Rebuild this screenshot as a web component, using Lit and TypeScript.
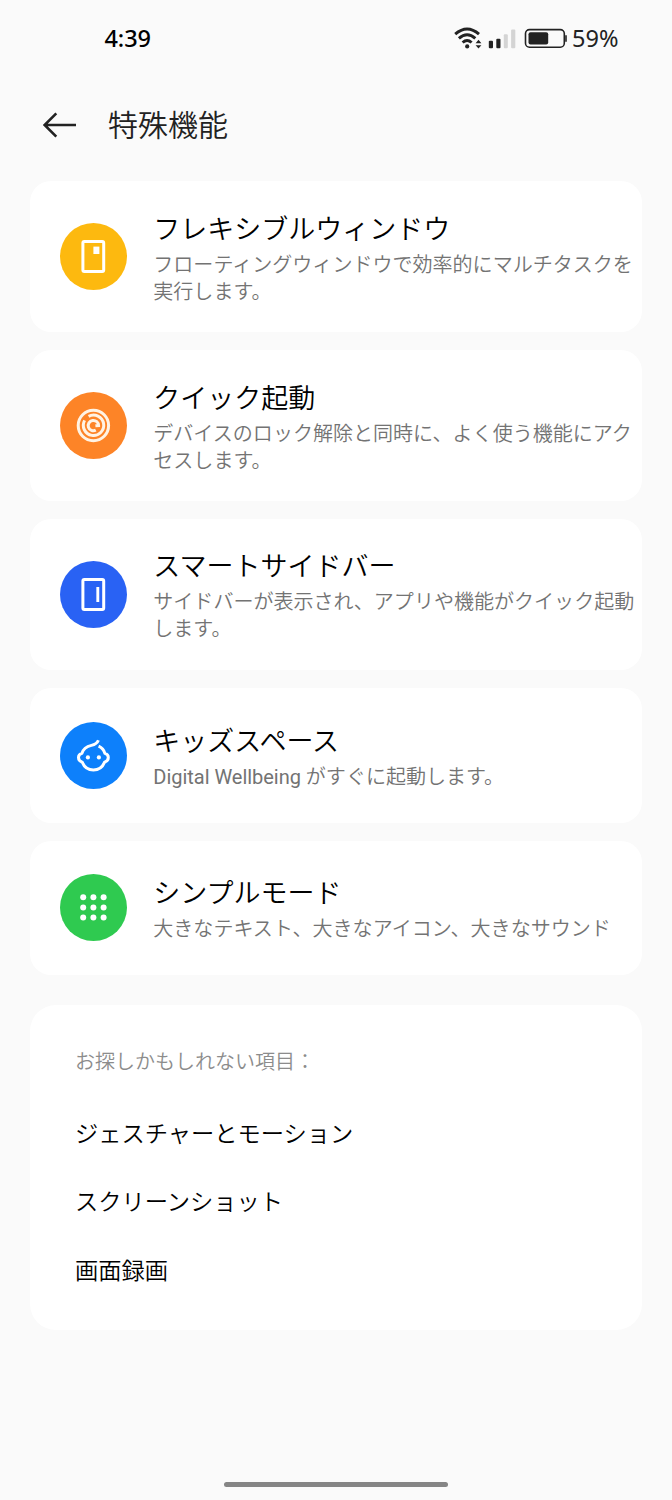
import { LitElement, html, svg, css } from "lit";
import { customElement, property } from "lit/decorators.js";

const icons: Record<string, unknown> = {
  window: svg`
    <rect x="22.9" y="18.6" width="20.8" height="29.8" rx="1.4" fill="none" stroke="#fff" stroke-width="3"/>
    <rect x="33.4" y="23.6" width="6" height="7.4" fill="#fff"/>`,
  swirl: svg`
    <g fill="none" stroke="#fff3e4" stroke-width="3">
      <circle cx="33.4" cy="33.5" r="15.2"/>
      <path d="M28.6 24.4 A10.2 10.2 0 1 1 24.6 28.4"/>
      <path d="M35.8 38.2 A5.2 5.2 0 1 1 38.6 33.6 L35.4 33.8"/>
    </g>`,
  sidebar: svg`
    <rect x="22.9" y="18.6" width="20.8" height="29.8" rx="1.4" fill="none" stroke="#fff" stroke-width="3"/>
    <path d="M37.8 26v15" stroke="#fff" stroke-width="2.9"/>`,
  kid: svg`
    <path d="M38.4 18.2C37.2 21.2 34.8 22.6 31.4 23.4C26.2 24.6 23 27.6 21.9 31.4C19.6 32 18.5 33.6 18.5 35.6C18.5 37.8 19.8 39.4 22.2 40.1C24.3 45.2 28.3 48 33.4 48C38.5 48 42.5 45.2 44.6 40.1C47 39.4 48.3 37.8 48.3 35.6C48.3 33.6 47.2 32 44.9 31.4C43.9 28 41.8 25.6 38.6 24.2" fill="none" stroke="#fff" stroke-width="3" stroke-linejoin="round"/>
    <circle cx="27.9" cy="35.4" r="2.1" fill="#fff"/><circle cx="38.9" cy="35.4" r="2.1" fill="#fff"/>`,
  grid: svg`<g fill="#fff">${[23.2, 33.4, 43.6].map((y) =>
    [23.2, 33.4, 43.6].map((x) => svg`<circle cx=${x} cy=${y} r="3"/>`))}</g>`,
};

@customElement("feature-card")
class FeatureCard extends LitElement {
  @property() icon = "";
  @property() color = "";
  @property() heading = "";
  @property({ attribute: false }) lines: unknown[] = [];

  static styles = css`
    :host { display: block; }
    .card {
      display: flex; align-items: center; box-sizing: border-box;
      min-height: 134.8px; padding: 26.4px 0 26.4px 30px; gap: 26.3px;
      background: #fff; border-radius: 21px;
    }
    .badge { width: 67px; height: 67px; flex: none; }
    .text { padding-top: 3px; }
    .title { font-size: 27px; line-height: 38px; color: #000; margin-bottom: 3px; white-space: nowrap; }
    .desc { font-size: 20.05px; line-height: 27px; color: #737373; white-space: nowrap; }
    .latin { font-weight: 400; letter-spacing: -0.04px; }
  `;

  render() {
    return html`
      <div class="card">
        <svg class="badge" viewBox="0 0 67 67">
          <circle cx="33.5" cy="33.5" r="33.5" fill=${this.color}/>
          ${icons[this.icon]}
        </svg>
        <div class="text">
          <div class="title">${this.heading}</div>
          ${this.lines.map((l) => html`<div class="desc">${l}</div>`)}
        </div>
      </div>`;
  }
}

const features = [
  { icon: "window", color: "#fdb90f", heading: "フレキシブルウィンドウ", lines: ["フローティングウィンドウで効率的にマルチタスクを", "実行します。"] },
  { icon: "swirl", color: "#fd8427", heading: "クイック起動", lines: ["デバイスのロック解除と同時に、よく使う機能にアク", "セスします。"] },
  { icon: "sidebar", color: "#2962f4", heading: "スマートサイドバー", lines: ["サイドバーが表示され、アプリや機能がクイック起動", "します。"] },
  { icon: "kid", color: "#0d80fb", heading: "キッズスペース", lines: [html`<span class="latin">Digital Wellbeing</span> がすぐに起動します。`] },
  { icon: "grid", color: "#2fca50", heading: "シンプルモード", lines: ["大きなテキスト、大きなアイコン、大きなサウンド"] },
];

@customElement("app-root")
class AppRoot extends LitElement {
  static styles = css`
    :host {
      display: flex; flex-direction: column; box-sizing: border-box;
      width: 672px; height: 1500px; background: #fafafa; overflow: hidden;
      font-family: Roboto, "Noto Sans CJK JP", sans-serif; font-weight: 350;
    }
    .status { display: flex; align-items: center; height: 76px; padding: 0 53px 0 104.5px; flex: none; }
    .time, .percent { font-family: "Noto Sans", sans-serif; font-size: 23.5px; line-height: 30px; }
    .time { font-weight: 500; color: #000; letter-spacing: -0.1px; flex: 1; }
    .indicators { width: 114px; height: 30px; flex: none; }
    .percent { font-weight: 400; color: #222; margin-left: 4px; width: 47px; white-space: nowrap; }
    header { display: flex; align-items: center; height: 98px; padding-left: 42px; gap: 31px; flex: none; }
    .back { width: 35px; height: 30px; }
    h1 { margin: 0; padding-top: 2px; font-size: 30px; line-height: 44px; font-weight: 350; color: #222; }
    main { display: flex; flex-direction: column; gap: 18px; padding: 7.4px 30px 0; flex: 1; }
    .related { margin-top: 12px; box-sizing: border-box; height: 325px; padding: 42px 45px 0; background: #fff; border-radius: 26px; }
    .label { font-size: 20px; line-height: 30px; color: #8c8c8c; }
    .links { display: grid; grid-auto-rows: 68.7px; align-items: center; margin-top: 22px; }
    .link { font-size: 23.25px; line-height: 34px; color: #000; }
    .home { width: 224px; height: 5px; border-radius: 3px; background: #858585; align-self: center; margin-bottom: 13px; flex: none; }
  `;

  render() {
    return html`
      <div class="status">
        <div class="time">4:39</div>
        <svg class="indicators" viewBox="453.5 23 114 30">
          <g fill="none" stroke="#222" stroke-width="3">
            <path d="M454.7 34.1Q466.6 23.9 478.5 34.1"/>
            <path d="M458.4 38.3Q466.6 31.1 474.8 38.3"/>
            <path d="M462.1 42.5Q466.6 38.5 471.1 42.5"/>
          </g>
          <circle cx="466.7" cy="46.4" r="2.1" fill="#222"/>
          <path d="M475.1 43.2L478 39.8L480.9 43.2ZM475.1 45.2L478 48.6L480.9 45.2Z" fill="#222"/>
          <rect x="488.3" y="40.8" width="4.2" height="7.4" rx="1" fill="#222"/>
          <rect x="495.8" y="38.8" width="4.2" height="9.4" rx="1" fill="#222"/>
          <rect x="503.3" y="34.2" width="4" height="14" rx="1" fill="#d4d4d4"/>
          <rect x="510.6" y="29.5" width="4.2" height="18.7" rx="1" fill="#d4d4d4"/>
          <rect x="525" y="29.6" width="38.8" height="17.6" rx="4" fill="none" stroke="#222" stroke-width="1.6"/>
          <rect x="528" y="32.2" width="19.7" height="12.2" rx="2" fill="#222"/>
          <path d="M565.5 35.3v6.4" stroke="#222" stroke-width="1.6"/>
        </svg>
        <div class="percent">59%</div>
      </div>
      <header>
        <svg class="back" viewBox="42 110 35 30">
          <path d="M76 125H44.8M56.3 113.3L44.6 125L56.3 136.7" fill="none" stroke="#222" stroke-width="2.6"/>
        </svg>
        <h1>特殊機能</h1>
      </header>
      <main>
        ${features.map((f) => html`<feature-card .icon=${f.icon} .color=${f.color} .heading=${f.heading} .lines=${f.lines}></feature-card>`)}
        <section class="related">
          <div class="label">お探しかもしれない項目：</div>
          <div class="links">
            ${["ジェスチャーとモーション", "スクリーンショット", "画面録画"].map((t) => html`<div class="link">${t}</div>`)}
          </div>
        </section>
      </main>
      <div class="home"></div>`;
  }
}
